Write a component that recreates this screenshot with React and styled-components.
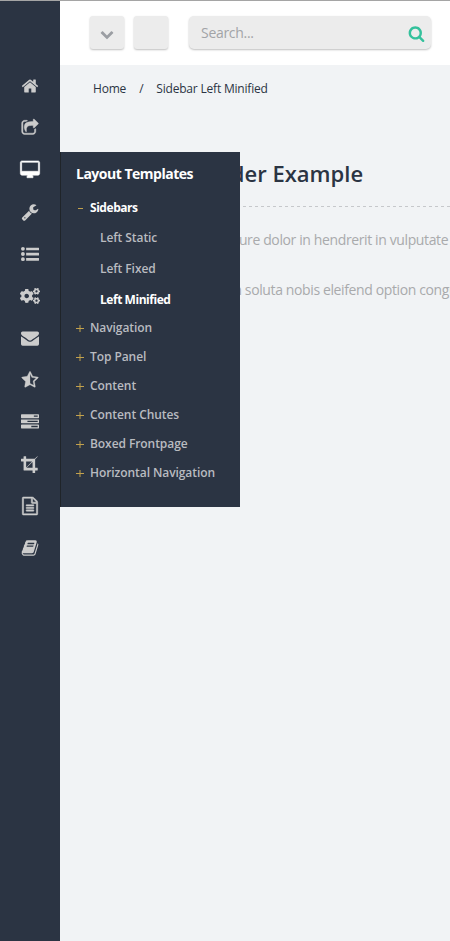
import React from "react";
import styled, { createGlobalStyle } from "styled-components";
import { FaCogs } from "react-icons/fa";

const GlobalStyle = createGlobalStyle`
  *, *::before, *::after { box-sizing: border-box; }
  html, body { margin: 0; padding: 0; overflow: hidden; background: #f1f3f5; }
  body { font-family: "Open Sans", "Noto Sans", sans-serif; }
  ul { list-style: none; margin: 0; padding: 0; }
`;

const Page = styled.div`
  display: flex;
  width: 100%;
  height: 941px;
  overflow: hidden;
  border-top: 1px solid #a5a5a5;
`;

const Sidebar = styled.nav`
  flex: none;
  position: relative;
  z-index: 2;
  width: 60px;
  padding-top: 64px;
  background: #2b3443;
`;

const NavItem = styled.li`
  position: relative;
  display: flex;
  align-items: center;
  justify-content: center;
  height: 42px;
  color: ${(p) => (p.$active ? "#ffffff" : "#cccccc")};
`;

const Glyph = styled.svg`
  display: block;
  flex: none;
  width: ${(p) => p.$size || 18}px;
  height: ${(p) => p.$size || 18}px;
  fill: currentColor;
  stroke: currentColor;
  stroke-width: ${(p) => p.$weight || 0};
  overflow: visible;
`;

const Flyout = styled.div`
  position: absolute;
  left: 60px;
  top: 3px;
  width: 180px;
  height: 355px;
  padding: 12px 0 0 15px;
  border-left: 1px solid #1f2429;
  background: #2b3443;
`;

const FlyoutTitle = styled.h3`
  margin: 0;
  font-size: 14px;
  line-height: 20px;
  font-weight: 700;
  letter-spacing: -0.5px;
  color: #fff;
  white-space: nowrap;
`;

const Group = styled.li`
  font-size: 12px;
  font-weight: 600;
  line-height: 29px;
  letter-spacing: -0.07px;
  color: #b9bbc0;
  white-space: nowrap;
`;

const GroupList = styled.ul`
  margin-top: 9px;
`;

const GroupRow = styled.div`
  display: flex;
  ${(p) => p.$active && "color: #fff; font-weight: 700; letter-spacing: -0.45px;"}
`;

const Sign = styled.span`
  display: flex;
  align-items: center;
  width: 14px;
  color: #c2a14d;
`;

const SubList = styled.ul`
  height: 91px;
  padding-left: 24px;
`;

const SubItem = styled.li`
  height: 31px;
  line-height: 31px;
  ${(p) => p.$active && "color: #fff; font-weight: 700; letter-spacing: -0.45px;"}
`;

const Main = styled.main`
  flex: 1;
  min-width: 0;
`;

const TopBar = styled.header`
  display: flex;
  height: 64px;
  padding: 15px 0 0 30px;
  background: #fff;
`;

const Button = styled.button`
  display: flex;
  align-items: center;
  justify-content: center;
  width: 34px;
  height: 33px;
  margin: 0 10px 0 0;
  padding: 3px 0 0;
  border: 0;
  border-radius: 3px;
  background: #ececec;
  box-shadow: 0 1px 2px rgba(0, 0, 0, 0.25);
  color: #9b9ea3;
`;

const SearchBox = styled.label`
  display: flex;
  align-items: center;
  justify-content: space-between;
  width: 242px;
  height: 33px;
  margin-left: 11px;
  padding: 1px 6px 0 12px;
  border-radius: 5px;
  background: #ececec;
  box-shadow: 0 1px 2px rgba(0, 0, 0, 0.25);
  color: #34c19c;
`;

const SearchInput = styled.input`
  width: 150px;
  padding: 0 0 2px;
  border: 0;
  outline: 0;
  background: transparent;
  font: 14px "Open Sans", sans-serif;
  letter-spacing: -0.3px;
  color: #333;
  &::placeholder { color: #a2a4a7; opacity: 1; }
`;

const Breadcrumbs = styled.div`
  display: flex;
  gap: 13px;
  padding: 15px 0 0 33px;
  font-size: 12px;
  line-height: 18px;
  letter-spacing: -0.2px;
  color: #2b3443;
  white-space: nowrap;
`;

const Content = styled.section`
  padding: 58px 0 0 33px;
  white-space: nowrap;
`;

const Heading = styled.h1`
  margin: 0;
  height: 50px;
  padding-left: 39px;
  font-size: 22px;
  line-height: 34px;
  font-weight: 600;
  color: #2b3443;
`;

const Rule = styled.svg`
  display: block;
  width: 100%;
  height: 1px;
  margin-bottom: 23px;
`;

const Paragraph = styled.p`
  margin: 0 0 30px;
  padding-left: 8px;
  font-size: 14px;
  line-height: 20px;
  letter-spacing: -0.38px;
  color: #a9aaac;
`;

const paths = {
  home: "M1472 992v480q0 26-19 45t-45 19h-384v-384h-256v384h-384q-26 0-45-19t-19-45v-480q0-1 .5-3t.5-3l575-474 575 474q1 2 1 6zm223-69l-62 74q-8 9-21 11h-3q-13 0-21-7l-692-577-692 577q-12 8-24 7-13-2-21-11l-62-74q-8-10-7-23.5t11-21.5l719-599q32-26 76-26t76 26l244 204v-195q0-14 9-23t23-9h192q14 0 23 9t9 23v408l219 182q10 8 11 21.5t-7 23.5z",
  share: "M1472 989v259q0 119-84.5 203.5t-203.5 84.5h-832q-119 0-203.5-84.5t-84.5-203.5v-832q0-119 84.5-203.5t203.5-84.5h255q13 0 22.5 9.5t9.5 22.5q0 27-26 32-77 26-133 60-10 4-16 4h-112q-66 0-113 47t-47 113v832q0 66 47 113t113 47h832q66 0 113-47t47-113v-214q0-19 18-29 28-13 54-37 16-16 35-8 21 9 21 29zm237-496l-384 384q-18 19-45 19-12 0-25-5-39-17-39-59v-192h-160q-323 0-438 131-119 137-74 473 3 23-20 34-8 2-12 2-16 0-26-13-10-14-21-31t-39.5-68.5-49.5-99.5-38.5-114-17.5-122q0-49 3.5-91t14-90 28-88 47-81.5 68.5-74 94.5-61.5 124.5-48.5 159.5-30.5 196.5-11h160v-192q0-42 39-59 13-5 25-5 26 0 45 19l384 384q19 19 19 45t-19 45z",
  desktop: "M1728 992v-832q0-13-9.5-22.5t-22.5-9.5h-1600q-13 0-22.5 9.5t-9.5 22.5v832q0 13 9.5 22.5t22.5 9.5h1600q13 0 22.5-9.5t9.5-22.5zm128-832v1088q0 66-47 113t-113 47h-544q0 37 16 77.5t32 71 16 43.5q0 26-19 45t-45 19h-512q-26 0-45-19t-19-45q0-14 16-44t32-70 16-78h-544q-66 0-113-47t-47-113v-1088q0-66 47-113t113-47h1600q66 0 113 47t47 113z",
  wrench: "M448 1472q0-26-19-45t-45-19-45 19-19 45 19 45 45 19 45-19 19-45zm644-420l-682 682q-37 37-90 37-52 0-91-37l-106-108q-38-36-38-90 0-53 38-91l681-681q39 98 114.5 173.5t173.5 114.5zm634-435q0 39-23 106-47 134-164.5 217.5t-258.5 83.5q-185 0-316.5-131.5t-131.5-316.5 131.5-316.5 316.5-131.5q58 0 121.5 16.5t107.5 46.5q16 11 16 28t-16 28l-293 169v224l193 107q5-3 79-48.5t135.5-81 70.5-35.5q15 0 23.5 10t8.5 25z",
  list: "M192 192a192 192 0 1 1 0 384a192 192 0 1 1 0-384zm0 512a192 192 0 1 1 0 384a192 192 0 1 1 0-384zm0 512a192 192 0 1 1 0 384a192 192 0 1 1 0-384zM512 268h1248q32 0 32 32v200q0 32-32 32h-1248zm0 512h1248q32 0 32 32v200q0 32-32 32h-1248zm0 512h1248q32 0 32 32v200q0 32-32 32h-1248z",
  mail: "M1792 710v794q0 66-47 113t-113 47h-1472q-66 0-113-47t-47-113v-794q44 49 101 87 362 246 497 345 57 42 92.5 65.5t94.5 48 110 24.5h2q51 0 110-24.5t94.5-48 92.5-65.5q170-123 498-345 57-39 100-87zm0-294q0 79-49 151t-122 123q-376 261-468 325-10 7-42.5 31t-54 38.5-52 32.5-57.5 27-50 9h-2q-23 0-50-9t-57.5-27-52-32.5-54-38.5-42.5-31q-91-64-262-182.5t-205-142.5q-62-42-117-115.5t-55-136.5q0-78 41.5-130t118.5-52h1472q65 0 112.5 47t47.5 113z",
  star: "M1250 957l257-250-356-52-66-10-30-60-159-322v963l59 31 318 168-60-355-12-66zm452-262l-363 354 86 500q5 33-6 51.5t-34 18.5q-17 0-40-12l-449-236-449 236q-23 12-40 12-23 0-34-18.5t-6-51.5l86-500-364-354q-32-32-23-59.5t54-34.5l502-73 225-455q20-41 49-41 28 0 49 41l225 455 502 73q45 7 54 34.5t-24 59.5z",
  tasks: "M1024 1408h640v-128h-640v128zm-384-512h1024v-128h-1024v128zm640-512h384v-128h-384v128zm512 832v256q0 26-19 45t-45 19h-1664q-26 0-45-19t-19-45v-256q0-26 19-45t45-19h1664q26 0 45 19t19 45zm0-512v256q0 26-19 45t-45 19h-1664q-26 0-45-19t-19-45v-256q0-26 19-45t45-19h1664q26 0 45 19t19 45zm0-512v256q0 26-19 45t-45 19h-1664q-26 0-45-19t-19-45v-256q0-26 19-45t45-19h1664q26 0 45 19t19 45z",
  crop: "M557 1280h595v-595zm-45-45l595-595h-595v595zm1152 77v192q0 14-9 23t-23 9h-224v224q0 14-9 23t-23 9h-192q-14 0-23-9t-9-23v-224h-864q-14 0-23-9t-9-23v-864h-224q-14 0-23-9t-9-23v-192q0-14 9-23t23-9h224v-224q0-14 9-23t23-9h192q14 0 23 9t9 23v224h851l246-247q10-9 23-9t23 9q9 10 9 23t-9 23l-247 246v851h224q14 0 23 9t9 23z",
  file: "M1596 380q28 28 48 76t20 88v1152q0 40-28 68t-68 28h-1344q-40 0-68-28t-28-68v-1600q0-40 28-68t68-28h896q40 0 88 20t76 48zm-444-244v376h376q-10-29-22-41l-313-313q-12-12-41-22zm384 1528v-1024h-416q-40 0-68-28t-28-68v-416h-768v1536h1280zm-1024-864q0-14 9-23t23-9h704q14 0 23 9t9 23v64q0 14-9 23t-23 9h-704q-14 0-23-9t-9-23v-64zm736 224q14 0 23 9t9 23v64q0 14-9 23t-23 9h-704q-14 0-23-9t-9-23v-64q0-14 9-23t23-9h704zm0 256q14 0 23 9t9 23v64q0 14-9 23t-23 9h-704q-14 0-23-9t-9-23v-64q0-14 9-23t23-9h704z",
  book: "M1703 478q40 57 18 129l-275 906q-19 64-76.5 107.5t-122.5 43.5h-923q-77 0-148.5-53.5t-99.5-131.5q-24-67-2-127 0-4 3-27t4-37q1-8-3-21.5t-3-19.5q2-11 8-21t16.5-23.5 16.5-23.5q23-38 45-91.5t30-91.5q3-10 .5-30t-.5-28q3-11 17-28t17-23q21-36 42-92t25-90q1-9-2.5-32t.5-28q4-13 22-30.5t22-22.5q19-26 42.5-84.5t27.5-96.5q1-8-3-25.5t-2-26.5q2-8 9-18t18-23 17-21q8-12 16.5-30.5t15-35 16-36 19.5-32 26.5-23.5 36-11.5 47.5 5.5l-1 3q38-9 51-9h761q74 0 114 56t18 130l-274 906q-36 119-71.5 153.5t-128.5 34.5h-869q-27 0-38 15-11 16-1 43 24 70 144 70h923q29 0 56-15.5t35-41.5l300-987q7-22 5-57 38 15 59 43zm-1064 2q-4 13 2 22.5t20 9.5h608q13 0 25.5-9.5t16.5-22.5l21-64q4-13-2-22.5t-20-9.5h-608q-13 0-25.5 9.5t-16.5 22.5zm-83 256q-4 13 2 22.5t20 9.5h608q13 0 25.5-9.5t16.5-22.5l21-64q4-13-2-22.5t-20-9.5h-608q-13 0-25.5 9.5t-16.5 22.5z",
  search: "M1216 832q0-185-131.5-316.5t-316.5-131.5-316.5 131.5-131.5 316.5 131.5 316.5 316.5 131.5 316.5-131.5 131.5-316.5zm512 832q0 52-38 90t-90 38q-54 0-90-38l-343-342q-179 124-399 124-143 0-273.5-55.5t-225-150-150-225-55.5-273.5 55.5-273.5 150-225 225-150 273.5-55.5 273.5 55.5 225 150 150 225 55.5 273.5q0 220-124 399l343 343q37 37 37 90z",
  chevron: "M1683 808l-742 741q-19 19-45 19t-45-19l-742-741q-19-19-19-45.5t19-45.5l166-165q19-19 45-19t45 19l531 531 531-531q19-19 45-19t45 19l166 165q19 19 19 45.5t-19 45.5z",
};

const iconWeights = { desktop: 60, share: 40, file: 50, star: 30 };

const Icon = ({ name, size }) => (
  <Glyph viewBox="0 0 1792 1792" $size={size} $weight={iconWeights[name]} aria-hidden="true">
    <path d={paths[name]} />
  </Glyph>
);

const Mark = ({ open }) => (
  <svg width="8" height="8" viewBox="0 0 8 8" fill="none" stroke="currentColor" aria-hidden="true">
    {open ? <path d="M2 4.5h5" /> : <path d="M0 4.5h8M4 1v7" />}
  </svg>
);

const groups = ["Navigation", "Top Panel", "Content", "Content Chutes", "Boxed Frontpage", "Horizontal Navigation"];

const LayoutMenu = () => (
  <Flyout>
    <FlyoutTitle>Layout Templates</FlyoutTitle>
    <GroupList>
      <Group>
        <GroupRow $active><Sign><Mark open /></Sign>Sidebars</GroupRow>
        <SubList>
          <SubItem>Left Static</SubItem>
          <SubItem>Left Fixed</SubItem>
          <SubItem $active>Left Minified</SubItem>
        </SubList>
      </Group>
      {groups.map((label) => (
        <Group key={label}>
          <GroupRow><Sign><Mark /></Sign>{label}</GroupRow>
        </Group>
      ))}
    </GroupList>
  </Flyout>
);

const navIcons = ["home", "share", "desktop", "wrench", "list", "cogs", "mail", "star", "tasks", "crop", "file", "book"];

export default function App() {
  return (
    <>
      <GlobalStyle />
      <Page>
        <Sidebar>
          <ul>
            {navIcons.map((name) => (
              <NavItem key={name} $active={name === "desktop"}>
                {name === "cogs" ? <FaCogs size={20} /> : <Icon name={name} />}
                {name === "desktop" && <LayoutMenu />}
              </NavItem>
            ))}
          </ul>
        </Sidebar>
        <Main>
          <TopBar>
            <Button aria-label="Expand"><Icon name="chevron" size={14} /></Button>
            <Button aria-label="Options" />
            <SearchBox>
              <SearchInput placeholder="Search..." />
              <Icon name="search" size={17} />
            </SearchBox>
          </TopBar>
          <Breadcrumbs>
            <span>Home</span>
            <span>/</span>
            <span>Sidebar Left Minified</span>
          </Breadcrumbs>
          <Content>
            <Heading>Page Header Example</Heading>
            <Rule><path d="M0 .5h400" stroke="#c6c8cb" strokeDasharray="3 3" /></Rule>
            <Paragraph>Duis autem vel eum iriure dolor in hendrerit in vulputate velit</Paragraph>
            <Paragraph>Nam liber tempor cum soluta nobis eleifend option congue</Paragraph>
          </Content>
        </Main>
      </Page>
    </>
  );
}
